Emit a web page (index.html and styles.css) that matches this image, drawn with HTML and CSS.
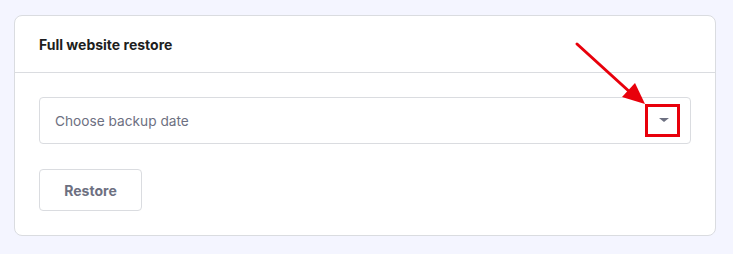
FILE: index.html
```html
<!DOCTYPE html>
<html>
<head>
<meta charset="utf-8">
<link rel="stylesheet" href="styles.css">
</head>
<body>
<div class="page">
  <section class="card">
    <header class="card-header">Full website restore</header>
    <div class="card-body">
      <div class="select">
        <span class="placeholder">Choose backup date</span>
        <span class="caret-box"><span class="caret"></span></span>
      </div>
      <div class="actions">
        <button class="btn">Restore</button>
      </div>
    </div>
  </section>
  <svg class="arrow" width="80" height="70" viewBox="0 0 80 70">
    <line x1="3" y1="3" x2="58" y2="53" stroke="#e8000b" stroke-width="3" stroke-linecap="round"/>
    <polygon points="71,63 48,56 61,42" fill="#e8000b"/>
  </svg>
</div>
</body>
</html>
```
FILE: styles.css
```css
* { box-sizing: border-box; }
html, body { margin: 0; padding: 0; }
body {
  background: #f4f5ff;
  font-family: Inter, "DejaVu Sans", sans-serif;
  width: 733px;
  height: 254px;
  overflow: hidden;
}
.page {
  position: relative;
  padding: 15px 17px 0 14px;
}
.card {
  background: #fff;
  border: 1px solid #dadce0;
  border-radius: 8px;
  height: 221px;
}
.card-header {
  height: 57px;
  padding: 0 24px;
  display: flex;
  align-items: center;
  font-size: 14px;
  font-weight: 700;
  color: #1d1e20;
  border-bottom: 1px solid #dadce0;
}
.card-body {
  padding: 24px 24px 0 24px;
}
.select {
  height: 47px;
  border: 1px solid #dadce0;
  border-radius: 4px;
  display: flex;
  align-items: center;
  justify-content: space-between;
  padding: 0 10px 0 15px;
}
.placeholder {
  font-size: 13.7px;
  color: #6d7081;
}
.caret-box {
  width: 35px;
  height: 33px;
  border: 3px solid #e8000b;
  display: flex;
  align-items: center;
  justify-content: center;
  padding-left: 2px;
  margin-top: -1px;
}
.caret {
  width: 0;
  height: 0;
  border-left: 5px solid transparent;
  border-right: 5px solid transparent;
  border-top: 4px solid #6d7081;
}
.actions {
  margin-top: 25px;
  display: flex;
}
.btn {
  width: 103px;
  height: 42px;
  background: #fff;
  border: 1px solid #dadce0;
  border-radius: 4px;
  font-family: inherit;
  font-size: 14px;
  font-weight: 700;
  color: #6d7081;
  padding: 0;
}
.arrow {
  position: absolute;
  left: 574px;
  top: 41px;
}
```
